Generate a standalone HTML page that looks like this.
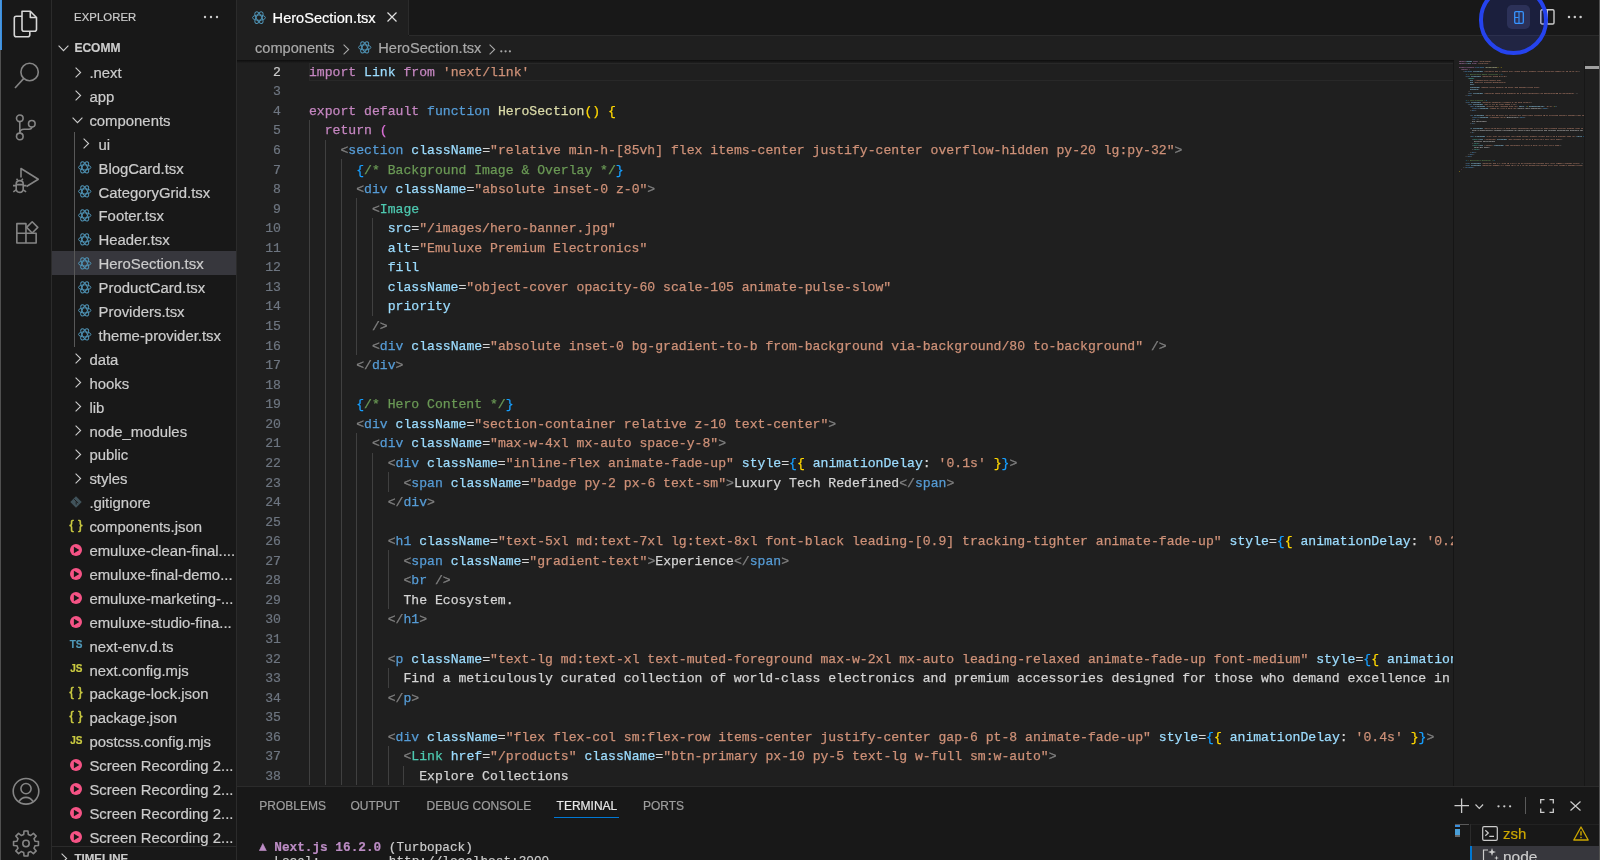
<!DOCTYPE html><html><head><meta charset="utf-8"><style>
*{margin:0;padding:0;box-sizing:border-box}
html,body{width:1600px;height:860px;overflow:hidden;background:#181818}
body{position:relative;font-family:"Liberation Sans",sans-serif;color:#CCCCCC;-webkit-text-stroke:0.2px currentColor}
.a{position:absolute}
.mono{font-family:"Liberation Mono",monospace}
.row{position:absolute;left:52px;width:184px;height:23.9px;white-space:nowrap}
.row .t{position:absolute;top:0;line-height:23.9px;font-size:14.2px;color:#CCCCCC}
.cl{-webkit-text-stroke:0.25px currentColor;position:absolute;left:237px;width:1300px;transform-origin:0 0;transform:scaleX(0.96446);height:19.56px;line-height:19.56px;white-space:pre;font-size:13.600px;color:#D4D4D4;overflow:hidden}
.ln{position:absolute;left:237px;width:44px;text-align:right;transform-origin:100% 0;transform:scaleX(0.96446);height:19.56px;line-height:19.56px;font-size:13.600px;color:#6E7681}
.g{position:absolute;width:1px;background:#404040}
svg{position:absolute;overflow:visible}
</style></head><body><div class="a" style="left:0;top:0;width:1600px;height:860px;overflow:hidden;will-change:transform">
<div class="a" style="left:0;top:0;width:1px;height:860px;background:#505050"></div>
<div class="a" style="left:51px;top:0;width:1px;height:860px;background:#2B2B2B"></div>
<div class="a" style="left:236px;top:0;width:1px;height:860px;background:#2B2B2B"></div>
<div class="a" style="left:237px;top:36px;width:1363px;height:751px;background:#1F1F1F"></div>
<div class="a" style="left:237px;top:0;width:171px;height:36px;background:#1F1F1F"></div>
<div class="a" style="left:408px;top:0;width:1px;height:35px;background:#2B2B2B"></div>
<div class="a" style="left:409px;top:35px;width:1191px;height:1px;background:#2B2B2B"></div>
<div class="a mono" style="left:0;top:0;width:1454px;height:786px;overflow:hidden;will-change:transform">
<div class="a" style="left:309px;top:62.8px;width:1145px;height:18.1px;border:1.6px solid #282828;border-right:none"></div>
<div class="ln" style="top:62.77px;color:#CCCCCC">2</div>
<div class="cl" style="top:62.77px;left:309.40px"><span style="color:#C586C0">import</span> <span style="color:#9CDCFE">Link</span> <span style="color:#C586C0">from</span> <span style="color:#CE9178">&#x27;next/link&#x27;</span></div>
<div class="ln" style="top:82.33px;color:#6E7681">3</div>
<div class="cl" style="top:82.33px;left:309.40px"></div>
<div class="ln" style="top:101.89px;color:#6E7681">4</div>
<div class="cl" style="top:101.89px;left:309.40px"><span style="color:#C586C0">export</span> <span style="color:#C586C0">default</span> <span style="color:#569CD6">function</span> <span style="color:#DCDCAA">HeroSection</span><span style="color:#FFD700">(</span><span style="color:#FFD700">)</span> <span style="color:#FFD700">{</span></div>
<div class="ln" style="top:121.45px;color:#6E7681">5</div>
<div class="g" style="left:309px;top:120.15px;height:19.86px"></div>
<div class="cl" style="top:121.45px;left:309.40px">  <span style="color:#C586C0">return</span> <span style="color:#DA70D6">(</span></div>
<div class="ln" style="top:141.01px;color:#6E7681">6</div>
<div class="g" style="left:309px;top:139.71px;height:19.86px"></div>
<div class="g" style="left:325px;top:139.71px;height:19.86px"></div>
<div class="cl" style="top:141.01px;left:309.40px">    <span style="color:#808080">&lt;</span><span style="color:#569CD6">section</span> <span style="color:#9CDCFE">className</span><span style="color:#D4D4D4">=</span><span style="color:#CE9178">&quot;relative min-h-[85vh] flex items-center justify-center overflow-hidden py-20 lg:py-32&quot;</span><span style="color:#808080">&gt;</span></div>
<div class="ln" style="top:160.57px;color:#6E7681">7</div>
<div class="g" style="left:309px;top:159.27px;height:19.86px"></div>
<div class="g" style="left:325px;top:159.27px;height:19.86px"></div>
<div class="g" style="left:341px;top:159.27px;height:19.86px"></div>
<div class="cl" style="top:160.57px;left:309.40px">      <span style="color:#179FFF">{</span><span style="color:#6A9955">/* Background Image &amp; Overlay */</span><span style="color:#179FFF">}</span></div>
<div class="ln" style="top:180.13px;color:#6E7681">8</div>
<div class="g" style="left:309px;top:178.83px;height:19.86px"></div>
<div class="g" style="left:325px;top:178.83px;height:19.86px"></div>
<div class="g" style="left:341px;top:178.83px;height:19.86px"></div>
<div class="cl" style="top:180.13px;left:309.40px">      <span style="color:#808080">&lt;</span><span style="color:#569CD6">div</span> <span style="color:#9CDCFE">className</span><span style="color:#D4D4D4">=</span><span style="color:#CE9178">&quot;absolute inset-0 z-0&quot;</span><span style="color:#808080">&gt;</span></div>
<div class="ln" style="top:199.69px;color:#6E7681">9</div>
<div class="g" style="left:309px;top:198.39px;height:19.86px"></div>
<div class="g" style="left:325px;top:198.39px;height:19.86px"></div>
<div class="g" style="left:341px;top:198.39px;height:19.86px"></div>
<div class="g" style="left:356px;top:198.39px;height:19.86px"></div>
<div class="cl" style="top:199.69px;left:309.40px">        <span style="color:#808080">&lt;</span><span style="color:#4EC9B0">Image</span></div>
<div class="ln" style="top:219.25px;color:#6E7681">10</div>
<div class="g" style="left:309px;top:217.95px;height:19.86px"></div>
<div class="g" style="left:325px;top:217.95px;height:19.86px"></div>
<div class="g" style="left:341px;top:217.95px;height:19.86px"></div>
<div class="g" style="left:356px;top:217.95px;height:19.86px"></div>
<div class="g" style="left:372px;top:217.95px;height:19.86px"></div>
<div class="cl" style="top:219.25px;left:309.40px">          <span style="color:#9CDCFE">src</span><span style="color:#D4D4D4">=</span><span style="color:#CE9178">&quot;/images/hero-banner.jpg&quot;</span></div>
<div class="ln" style="top:238.81px;color:#6E7681">11</div>
<div class="g" style="left:309px;top:237.51px;height:19.86px"></div>
<div class="g" style="left:325px;top:237.51px;height:19.86px"></div>
<div class="g" style="left:341px;top:237.51px;height:19.86px"></div>
<div class="g" style="left:356px;top:237.51px;height:19.86px"></div>
<div class="g" style="left:372px;top:237.51px;height:19.86px"></div>
<div class="cl" style="top:238.81px;left:309.40px">          <span style="color:#9CDCFE">alt</span><span style="color:#D4D4D4">=</span><span style="color:#CE9178">&quot;Emuluxe Premium Electronics&quot;</span></div>
<div class="ln" style="top:258.37px;color:#6E7681">12</div>
<div class="g" style="left:309px;top:257.07px;height:19.86px"></div>
<div class="g" style="left:325px;top:257.07px;height:19.86px"></div>
<div class="g" style="left:341px;top:257.07px;height:19.86px"></div>
<div class="g" style="left:356px;top:257.07px;height:19.86px"></div>
<div class="g" style="left:372px;top:257.07px;height:19.86px"></div>
<div class="cl" style="top:258.37px;left:309.40px">          <span style="color:#9CDCFE">fill</span></div>
<div class="ln" style="top:277.93px;color:#6E7681">13</div>
<div class="g" style="left:309px;top:276.63px;height:19.86px"></div>
<div class="g" style="left:325px;top:276.63px;height:19.86px"></div>
<div class="g" style="left:341px;top:276.63px;height:19.86px"></div>
<div class="g" style="left:356px;top:276.63px;height:19.86px"></div>
<div class="g" style="left:372px;top:276.63px;height:19.86px"></div>
<div class="cl" style="top:277.93px;left:309.40px">          <span style="color:#9CDCFE">className</span><span style="color:#D4D4D4">=</span><span style="color:#CE9178">&quot;object-cover opacity-60 scale-105 animate-pulse-slow&quot;</span></div>
<div class="ln" style="top:297.49px;color:#6E7681">14</div>
<div class="g" style="left:309px;top:296.19px;height:19.86px"></div>
<div class="g" style="left:325px;top:296.19px;height:19.86px"></div>
<div class="g" style="left:341px;top:296.19px;height:19.86px"></div>
<div class="g" style="left:356px;top:296.19px;height:19.86px"></div>
<div class="g" style="left:372px;top:296.19px;height:19.86px"></div>
<div class="cl" style="top:297.49px;left:309.40px">          <span style="color:#9CDCFE">priority</span></div>
<div class="ln" style="top:317.05px;color:#6E7681">15</div>
<div class="g" style="left:309px;top:315.75px;height:19.86px"></div>
<div class="g" style="left:325px;top:315.75px;height:19.86px"></div>
<div class="g" style="left:341px;top:315.75px;height:19.86px"></div>
<div class="g" style="left:356px;top:315.75px;height:19.86px"></div>
<div class="cl" style="top:317.05px;left:309.40px">        <span style="color:#808080">/&gt;</span></div>
<div class="ln" style="top:336.61px;color:#6E7681">16</div>
<div class="g" style="left:309px;top:335.31px;height:19.86px"></div>
<div class="g" style="left:325px;top:335.31px;height:19.86px"></div>
<div class="g" style="left:341px;top:335.31px;height:19.86px"></div>
<div class="g" style="left:356px;top:335.31px;height:19.86px"></div>
<div class="cl" style="top:336.61px;left:309.40px">        <span style="color:#808080">&lt;</span><span style="color:#569CD6">div</span> <span style="color:#9CDCFE">className</span><span style="color:#D4D4D4">=</span><span style="color:#CE9178">&quot;absolute inset-0 bg-gradient-to-b from-background via-background/80 to-background&quot;</span> <span style="color:#808080">/&gt;</span></div>
<div class="ln" style="top:356.17px;color:#6E7681">17</div>
<div class="g" style="left:309px;top:354.87px;height:19.86px"></div>
<div class="g" style="left:325px;top:354.87px;height:19.86px"></div>
<div class="g" style="left:341px;top:354.87px;height:19.86px"></div>
<div class="cl" style="top:356.17px;left:309.40px">      <span style="color:#808080">&lt;/</span><span style="color:#569CD6">div</span><span style="color:#808080">&gt;</span></div>
<div class="ln" style="top:375.73px;color:#6E7681">18</div>
<div class="g" style="left:309px;top:374.43px;height:19.86px"></div>
<div class="g" style="left:325px;top:374.43px;height:19.86px"></div>
<div class="g" style="left:341px;top:374.43px;height:19.86px"></div>
<div class="cl" style="top:375.73px;left:309.40px"></div>
<div class="ln" style="top:395.29px;color:#6E7681">19</div>
<div class="g" style="left:309px;top:393.99px;height:19.86px"></div>
<div class="g" style="left:325px;top:393.99px;height:19.86px"></div>
<div class="g" style="left:341px;top:393.99px;height:19.86px"></div>
<div class="cl" style="top:395.29px;left:309.40px">      <span style="color:#179FFF">{</span><span style="color:#6A9955">/* Hero Content */</span><span style="color:#179FFF">}</span></div>
<div class="ln" style="top:414.85px;color:#6E7681">20</div>
<div class="g" style="left:309px;top:413.55px;height:19.86px"></div>
<div class="g" style="left:325px;top:413.55px;height:19.86px"></div>
<div class="g" style="left:341px;top:413.55px;height:19.86px"></div>
<div class="cl" style="top:414.85px;left:309.40px">      <span style="color:#808080">&lt;</span><span style="color:#569CD6">div</span> <span style="color:#9CDCFE">className</span><span style="color:#D4D4D4">=</span><span style="color:#CE9178">&quot;section-container relative z-10 text-center&quot;</span><span style="color:#808080">&gt;</span></div>
<div class="ln" style="top:434.41px;color:#6E7681">21</div>
<div class="g" style="left:309px;top:433.11px;height:19.86px"></div>
<div class="g" style="left:325px;top:433.11px;height:19.86px"></div>
<div class="g" style="left:341px;top:433.11px;height:19.86px"></div>
<div class="g" style="left:356px;top:433.11px;height:19.86px"></div>
<div class="cl" style="top:434.41px;left:309.40px">        <span style="color:#808080">&lt;</span><span style="color:#569CD6">div</span> <span style="color:#9CDCFE">className</span><span style="color:#D4D4D4">=</span><span style="color:#CE9178">&quot;max-w-4xl mx-auto space-y-8&quot;</span><span style="color:#808080">&gt;</span></div>
<div class="ln" style="top:453.97px;color:#6E7681">22</div>
<div class="g" style="left:309px;top:452.67px;height:19.86px"></div>
<div class="g" style="left:325px;top:452.67px;height:19.86px"></div>
<div class="g" style="left:341px;top:452.67px;height:19.86px"></div>
<div class="g" style="left:356px;top:452.67px;height:19.86px"></div>
<div class="g" style="left:372px;top:452.67px;height:19.86px"></div>
<div class="cl" style="top:453.97px;left:309.40px">          <span style="color:#808080">&lt;</span><span style="color:#569CD6">div</span> <span style="color:#9CDCFE">className</span><span style="color:#D4D4D4">=</span><span style="color:#CE9178">&quot;inline-flex animate-fade-up&quot;</span> <span style="color:#9CDCFE">style</span><span style="color:#D4D4D4">=</span><span style="color:#179FFF">{</span><span style="color:#FFD700">{</span> <span style="color:#9CDCFE">animationDelay</span><span style="color:#D4D4D4">:</span> <span style="color:#CE9178">&#x27;0.1s&#x27;</span> <span style="color:#FFD700">}</span><span style="color:#179FFF">}</span><span style="color:#808080">&gt;</span></div>
<div class="ln" style="top:473.53px;color:#6E7681">23</div>
<div class="g" style="left:309px;top:472.23px;height:19.86px"></div>
<div class="g" style="left:325px;top:472.23px;height:19.86px"></div>
<div class="g" style="left:341px;top:472.23px;height:19.86px"></div>
<div class="g" style="left:356px;top:472.23px;height:19.86px"></div>
<div class="g" style="left:372px;top:472.23px;height:19.86px"></div>
<div class="g" style="left:388px;top:472.23px;height:19.86px"></div>
<div class="cl" style="top:473.53px;left:309.40px">            <span style="color:#808080">&lt;</span><span style="color:#569CD6">span</span> <span style="color:#9CDCFE">className</span><span style="color:#D4D4D4">=</span><span style="color:#CE9178">&quot;badge py-2 px-6 text-sm&quot;</span><span style="color:#808080">&gt;</span><span style="color:#D4D4D4">Luxury Tech Redefined</span><span style="color:#808080">&lt;/</span><span style="color:#569CD6">span</span><span style="color:#808080">&gt;</span></div>
<div class="ln" style="top:493.09px;color:#6E7681">24</div>
<div class="g" style="left:309px;top:491.79px;height:19.86px"></div>
<div class="g" style="left:325px;top:491.79px;height:19.86px"></div>
<div class="g" style="left:341px;top:491.79px;height:19.86px"></div>
<div class="g" style="left:356px;top:491.79px;height:19.86px"></div>
<div class="g" style="left:372px;top:491.79px;height:19.86px"></div>
<div class="cl" style="top:493.09px;left:309.40px">          <span style="color:#808080">&lt;/</span><span style="color:#569CD6">div</span><span style="color:#808080">&gt;</span></div>
<div class="ln" style="top:512.65px;color:#6E7681">25</div>
<div class="g" style="left:309px;top:511.35px;height:19.86px"></div>
<div class="g" style="left:325px;top:511.35px;height:19.86px"></div>
<div class="g" style="left:341px;top:511.35px;height:19.86px"></div>
<div class="g" style="left:356px;top:511.35px;height:19.86px"></div>
<div class="g" style="left:372px;top:511.35px;height:19.86px"></div>
<div class="cl" style="top:512.65px;left:309.40px"></div>
<div class="ln" style="top:532.21px;color:#6E7681">26</div>
<div class="g" style="left:309px;top:530.91px;height:19.86px"></div>
<div class="g" style="left:325px;top:530.91px;height:19.86px"></div>
<div class="g" style="left:341px;top:530.91px;height:19.86px"></div>
<div class="g" style="left:356px;top:530.91px;height:19.86px"></div>
<div class="g" style="left:372px;top:530.91px;height:19.86px"></div>
<div class="cl" style="top:532.21px;left:309.40px">          <span style="color:#808080">&lt;</span><span style="color:#569CD6">h1</span> <span style="color:#9CDCFE">className</span><span style="color:#D4D4D4">=</span><span style="color:#CE9178">&quot;text-5xl md:text-7xl lg:text-8xl font-black leading-[0.9] tracking-tighter animate-fade-up&quot;</span> <span style="color:#9CDCFE">style</span><span style="color:#D4D4D4">=</span><span style="color:#179FFF">{</span><span style="color:#FFD700">{</span> <span style="color:#9CDCFE">animationDelay</span><span style="color:#D4D4D4">:</span> <span style="color:#CE9178">&#x27;0.2s&#x27;</span> <span style="color:#FFD700">}</span><span style="color:#179FFF">}</span><span style="color:#808080">&gt;</span></div>
<div class="ln" style="top:551.77px;color:#6E7681">27</div>
<div class="g" style="left:309px;top:550.47px;height:19.86px"></div>
<div class="g" style="left:325px;top:550.47px;height:19.86px"></div>
<div class="g" style="left:341px;top:550.47px;height:19.86px"></div>
<div class="g" style="left:356px;top:550.47px;height:19.86px"></div>
<div class="g" style="left:372px;top:550.47px;height:19.86px"></div>
<div class="g" style="left:388px;top:550.47px;height:19.86px"></div>
<div class="cl" style="top:551.77px;left:309.40px">            <span style="color:#808080">&lt;</span><span style="color:#569CD6">span</span> <span style="color:#9CDCFE">className</span><span style="color:#D4D4D4">=</span><span style="color:#CE9178">&quot;gradient-text&quot;</span><span style="color:#808080">&gt;</span><span style="color:#D4D4D4">Experience</span><span style="color:#808080">&lt;/</span><span style="color:#569CD6">span</span><span style="color:#808080">&gt;</span></div>
<div class="ln" style="top:571.33px;color:#6E7681">28</div>
<div class="g" style="left:309px;top:570.03px;height:19.86px"></div>
<div class="g" style="left:325px;top:570.03px;height:19.86px"></div>
<div class="g" style="left:341px;top:570.03px;height:19.86px"></div>
<div class="g" style="left:356px;top:570.03px;height:19.86px"></div>
<div class="g" style="left:372px;top:570.03px;height:19.86px"></div>
<div class="g" style="left:388px;top:570.03px;height:19.86px"></div>
<div class="cl" style="top:571.33px;left:309.40px">            <span style="color:#808080">&lt;</span><span style="color:#569CD6">br</span> <span style="color:#808080">/&gt;</span></div>
<div class="ln" style="top:590.89px;color:#6E7681">29</div>
<div class="g" style="left:309px;top:589.59px;height:19.86px"></div>
<div class="g" style="left:325px;top:589.59px;height:19.86px"></div>
<div class="g" style="left:341px;top:589.59px;height:19.86px"></div>
<div class="g" style="left:356px;top:589.59px;height:19.86px"></div>
<div class="g" style="left:372px;top:589.59px;height:19.86px"></div>
<div class="g" style="left:388px;top:589.59px;height:19.86px"></div>
<div class="cl" style="top:590.89px;left:309.40px">            <span style="color:#D4D4D4">The Ecosystem.</span></div>
<div class="ln" style="top:610.45px;color:#6E7681">30</div>
<div class="g" style="left:309px;top:609.15px;height:19.86px"></div>
<div class="g" style="left:325px;top:609.15px;height:19.86px"></div>
<div class="g" style="left:341px;top:609.15px;height:19.86px"></div>
<div class="g" style="left:356px;top:609.15px;height:19.86px"></div>
<div class="g" style="left:372px;top:609.15px;height:19.86px"></div>
<div class="cl" style="top:610.45px;left:309.40px">          <span style="color:#808080">&lt;/</span><span style="color:#569CD6">h1</span><span style="color:#808080">&gt;</span></div>
<div class="ln" style="top:630.01px;color:#6E7681">31</div>
<div class="g" style="left:309px;top:628.71px;height:19.86px"></div>
<div class="g" style="left:325px;top:628.71px;height:19.86px"></div>
<div class="g" style="left:341px;top:628.71px;height:19.86px"></div>
<div class="g" style="left:356px;top:628.71px;height:19.86px"></div>
<div class="g" style="left:372px;top:628.71px;height:19.86px"></div>
<div class="cl" style="top:630.01px;left:309.40px"></div>
<div class="ln" style="top:649.57px;color:#6E7681">32</div>
<div class="g" style="left:309px;top:648.27px;height:19.86px"></div>
<div class="g" style="left:325px;top:648.27px;height:19.86px"></div>
<div class="g" style="left:341px;top:648.27px;height:19.86px"></div>
<div class="g" style="left:356px;top:648.27px;height:19.86px"></div>
<div class="g" style="left:372px;top:648.27px;height:19.86px"></div>
<div class="cl" style="top:649.57px;left:309.40px">          <span style="color:#808080">&lt;</span><span style="color:#569CD6">p</span> <span style="color:#9CDCFE">className</span><span style="color:#D4D4D4">=</span><span style="color:#CE9178">&quot;text-lg md:text-xl text-muted-foreground max-w-2xl mx-auto leading-relaxed animate-fade-up font-medium&quot;</span> <span style="color:#9CDCFE">style</span><span style="color:#D4D4D4">=</span><span style="color:#179FFF">{</span><span style="color:#FFD700">{</span> <span style="color:#9CDCFE">animationDelay</span><span style="color:#D4D4D4">:</span> <span style="color:#CE9178">&#x27;0.3s&#x27;</span> <span style="color:#FFD700">}</span><span style="color:#179FFF">}</span><span style="color:#808080">&gt;</span></div>
<div class="ln" style="top:669.13px;color:#6E7681">33</div>
<div class="g" style="left:309px;top:667.83px;height:19.86px"></div>
<div class="g" style="left:325px;top:667.83px;height:19.86px"></div>
<div class="g" style="left:341px;top:667.83px;height:19.86px"></div>
<div class="g" style="left:356px;top:667.83px;height:19.86px"></div>
<div class="g" style="left:372px;top:667.83px;height:19.86px"></div>
<div class="g" style="left:388px;top:667.83px;height:19.86px"></div>
<div class="cl" style="top:669.13px;left:309.40px">            <span style="color:#D4D4D4">Find a meticulously curated collection of world-class electronics and premium accessories designed for those who demand excellence in every detail.</span></div>
<div class="ln" style="top:688.69px;color:#6E7681">34</div>
<div class="g" style="left:309px;top:687.39px;height:19.86px"></div>
<div class="g" style="left:325px;top:687.39px;height:19.86px"></div>
<div class="g" style="left:341px;top:687.39px;height:19.86px"></div>
<div class="g" style="left:356px;top:687.39px;height:19.86px"></div>
<div class="g" style="left:372px;top:687.39px;height:19.86px"></div>
<div class="cl" style="top:688.69px;left:309.40px">          <span style="color:#808080">&lt;/</span><span style="color:#569CD6">p</span><span style="color:#808080">&gt;</span></div>
<div class="ln" style="top:708.25px;color:#6E7681">35</div>
<div class="g" style="left:309px;top:706.95px;height:19.86px"></div>
<div class="g" style="left:325px;top:706.95px;height:19.86px"></div>
<div class="g" style="left:341px;top:706.95px;height:19.86px"></div>
<div class="g" style="left:356px;top:706.95px;height:19.86px"></div>
<div class="g" style="left:372px;top:706.95px;height:19.86px"></div>
<div class="cl" style="top:708.25px;left:309.40px"></div>
<div class="ln" style="top:727.81px;color:#6E7681">36</div>
<div class="g" style="left:309px;top:726.51px;height:19.86px"></div>
<div class="g" style="left:325px;top:726.51px;height:19.86px"></div>
<div class="g" style="left:341px;top:726.51px;height:19.86px"></div>
<div class="g" style="left:356px;top:726.51px;height:19.86px"></div>
<div class="g" style="left:372px;top:726.51px;height:19.86px"></div>
<div class="cl" style="top:727.81px;left:309.40px">          <span style="color:#808080">&lt;</span><span style="color:#569CD6">div</span> <span style="color:#9CDCFE">className</span><span style="color:#D4D4D4">=</span><span style="color:#CE9178">&quot;flex flex-col sm:flex-row items-center justify-center gap-6 pt-8 animate-fade-up&quot;</span> <span style="color:#9CDCFE">style</span><span style="color:#D4D4D4">=</span><span style="color:#179FFF">{</span><span style="color:#FFD700">{</span> <span style="color:#9CDCFE">animationDelay</span><span style="color:#D4D4D4">:</span> <span style="color:#CE9178">&#x27;0.4s&#x27;</span> <span style="color:#FFD700">}</span><span style="color:#179FFF">}</span><span style="color:#808080">&gt;</span></div>
<div class="ln" style="top:747.37px;color:#6E7681">37</div>
<div class="g" style="left:309px;top:746.07px;height:19.86px"></div>
<div class="g" style="left:325px;top:746.07px;height:19.86px"></div>
<div class="g" style="left:341px;top:746.07px;height:19.86px"></div>
<div class="g" style="left:356px;top:746.07px;height:19.86px"></div>
<div class="g" style="left:372px;top:746.07px;height:19.86px"></div>
<div class="g" style="left:388px;top:746.07px;height:19.86px"></div>
<div class="cl" style="top:747.37px;left:309.40px">            <span style="color:#808080">&lt;</span><span style="color:#4EC9B0">Link</span> <span style="color:#9CDCFE">href</span><span style="color:#D4D4D4">=</span><span style="color:#CE9178">&quot;/products&quot;</span> <span style="color:#9CDCFE">className</span><span style="color:#D4D4D4">=</span><span style="color:#CE9178">&quot;btn-primary px-10 py-5 text-lg w-full sm:w-auto&quot;</span><span style="color:#808080">&gt;</span></div>
<div class="ln" style="top:766.93px;color:#6E7681">38</div>
<div class="g" style="left:309px;top:765.63px;height:19.86px"></div>
<div class="g" style="left:325px;top:765.63px;height:19.86px"></div>
<div class="g" style="left:341px;top:765.63px;height:19.86px"></div>
<div class="g" style="left:356px;top:765.63px;height:19.86px"></div>
<div class="g" style="left:372px;top:765.63px;height:19.86px"></div>
<div class="g" style="left:388px;top:765.63px;height:19.86px"></div>
<div class="g" style="left:403px;top:765.63px;height:19.86px"></div>
<div class="cl" style="top:766.93px;left:309.40px">              <span style="color:#D4D4D4">Explore Collections</span></div>
</div>
<div class="a" style="left:74px;top:9px;font-size:11.3px;line-height:16px;color:#CCCCCC;letter-spacing:0.1px">EXPLORER</div>
<svg style="left:203px;top:15px" width="16" height="4"><circle cx="2" cy="2" r="1.2" fill="#CCCCCC"/><circle cx="8" cy="2" r="1.2" fill="#CCCCCC"/><circle cx="14" cy="2" r="1.2" fill="#CCCCCC"/></svg>
<svg style="left:57.7px;top:45.2px" width="11" height="7"><path d="M0.6 0.6 L5.5 5.6 L10.4 0.6" fill="none" stroke="#CCCCCC" stroke-width="1.1"/></svg>
<div class="a" style="left:74.4px;top:40px;font-weight:bold;font-size:12px;line-height:16px;color:#CCCCCC">ECOMM</div>
<div class="a" style="left:52px;top:36px;width:184px;height:810px;overflow:hidden">
<svg style="left:22.7px;top:30.5px" width="7" height="11"><path d="M0.6 0.6 L5.6 5.5 L0.6 10.4" fill="none" stroke="#CCCCCC" stroke-width="1.1"/></svg>
<div class="a" style="left:37.40px;top:26.00px;height:23.90px;line-height:23.90px;font-size:14.9px;color:#CCCCCC;white-space:nowrap">.next</div>
<svg style="left:22.7px;top:54.4px" width="7" height="11"><path d="M0.6 0.6 L5.6 5.5 L0.6 10.4" fill="none" stroke="#CCCCCC" stroke-width="1.1"/></svg>
<div class="a" style="left:37.40px;top:49.90px;height:23.90px;line-height:23.90px;font-size:14.9px;color:#CCCCCC;white-space:nowrap">app</div>
<svg style="left:19.8px;top:80.8px" width="11" height="7"><path d="M0.6 0.6 L5.5 5.6 L10.4 0.6" fill="none" stroke="#CCCCCC" stroke-width="1.1"/></svg>
<div class="a" style="left:37.40px;top:73.80px;height:23.90px;line-height:23.90px;font-size:14.9px;color:#CCCCCC;white-space:nowrap">components</div>
<svg style="left:31.4px;top:102.1px" width="7" height="11"><path d="M0.6 0.6 L5.6 5.5 L0.6 10.4" fill="none" stroke="#CCCCCC" stroke-width="1.1"/></svg>
<div class="a" style="left:46.50px;top:97.70px;height:23.90px;line-height:23.90px;font-size:14.9px;color:#CCCCCC;white-space:nowrap">ui</div>
<svg style="left:26.2px;top:125.0px" width="14.0" height="13.0"><g fill="none" stroke="#4F93B5" stroke-width="1"><ellipse cx="6.7" cy="6.4" rx="6.2" ry="2.55"/><ellipse cx="6.7" cy="6.4" rx="6.2" ry="2.55" transform="rotate(60 6.7 6.4)"/><ellipse cx="6.7" cy="6.4" rx="6.2" ry="2.55" transform="rotate(120 6.7 6.4)"/></g></svg>
<div class="a" style="left:46.50px;top:121.60px;height:23.90px;line-height:23.90px;font-size:14.9px;color:#CCCCCC;white-space:nowrap">BlogCard.tsx</div>
<svg style="left:26.2px;top:148.9px" width="14.0" height="13.0"><g fill="none" stroke="#4F93B5" stroke-width="1"><ellipse cx="6.7" cy="6.4" rx="6.2" ry="2.55"/><ellipse cx="6.7" cy="6.4" rx="6.2" ry="2.55" transform="rotate(60 6.7 6.4)"/><ellipse cx="6.7" cy="6.4" rx="6.2" ry="2.55" transform="rotate(120 6.7 6.4)"/></g></svg>
<div class="a" style="left:46.50px;top:145.50px;height:23.90px;line-height:23.90px;font-size:14.9px;color:#CCCCCC;white-space:nowrap">CategoryGrid.tsx</div>
<svg style="left:26.2px;top:172.8px" width="14.0" height="13.0"><g fill="none" stroke="#4F93B5" stroke-width="1"><ellipse cx="6.7" cy="6.4" rx="6.2" ry="2.55"/><ellipse cx="6.7" cy="6.4" rx="6.2" ry="2.55" transform="rotate(60 6.7 6.4)"/><ellipse cx="6.7" cy="6.4" rx="6.2" ry="2.55" transform="rotate(120 6.7 6.4)"/></g></svg>
<div class="a" style="left:46.50px;top:169.40px;height:23.90px;line-height:23.90px;font-size:14.9px;color:#CCCCCC;white-space:nowrap">Footer.tsx</div>
<svg style="left:26.2px;top:196.7px" width="14.0" height="13.0"><g fill="none" stroke="#4F93B5" stroke-width="1"><ellipse cx="6.7" cy="6.4" rx="6.2" ry="2.55"/><ellipse cx="6.7" cy="6.4" rx="6.2" ry="2.55" transform="rotate(60 6.7 6.4)"/><ellipse cx="6.7" cy="6.4" rx="6.2" ry="2.55" transform="rotate(120 6.7 6.4)"/></g></svg>
<div class="a" style="left:46.50px;top:193.30px;height:23.90px;line-height:23.90px;font-size:14.9px;color:#CCCCCC;white-space:nowrap">Header.tsx</div>
<div class="a" style="left:0;top:215.20px;width:184px;height:24.00px;background:#37373D"></div>
<svg style="left:26.2px;top:220.6px" width="14.0" height="13.0"><g fill="none" stroke="#4F93B5" stroke-width="1"><ellipse cx="6.7" cy="6.4" rx="6.2" ry="2.55"/><ellipse cx="6.7" cy="6.4" rx="6.2" ry="2.55" transform="rotate(60 6.7 6.4)"/><ellipse cx="6.7" cy="6.4" rx="6.2" ry="2.55" transform="rotate(120 6.7 6.4)"/></g></svg>
<div class="a" style="left:46.50px;top:217.20px;height:23.90px;line-height:23.90px;font-size:14.9px;color:#CCCCCC;white-space:nowrap">HeroSection.tsx</div>
<svg style="left:26.2px;top:244.6px" width="14.0" height="13.0"><g fill="none" stroke="#4F93B5" stroke-width="1"><ellipse cx="6.7" cy="6.4" rx="6.2" ry="2.55"/><ellipse cx="6.7" cy="6.4" rx="6.2" ry="2.55" transform="rotate(60 6.7 6.4)"/><ellipse cx="6.7" cy="6.4" rx="6.2" ry="2.55" transform="rotate(120 6.7 6.4)"/></g></svg>
<div class="a" style="left:46.50px;top:241.10px;height:23.90px;line-height:23.90px;font-size:14.9px;color:#CCCCCC;white-space:nowrap">ProductCard.tsx</div>
<svg style="left:26.2px;top:268.4px" width="14.0" height="13.0"><g fill="none" stroke="#4F93B5" stroke-width="1"><ellipse cx="6.7" cy="6.4" rx="6.2" ry="2.55"/><ellipse cx="6.7" cy="6.4" rx="6.2" ry="2.55" transform="rotate(60 6.7 6.4)"/><ellipse cx="6.7" cy="6.4" rx="6.2" ry="2.55" transform="rotate(120 6.7 6.4)"/></g></svg>
<div class="a" style="left:46.50px;top:265.00px;height:23.90px;line-height:23.90px;font-size:14.9px;color:#CCCCCC;white-space:nowrap">Providers.tsx</div>
<svg style="left:26.2px;top:292.3px" width="14.0" height="13.0"><g fill="none" stroke="#4F93B5" stroke-width="1"><ellipse cx="6.7" cy="6.4" rx="6.2" ry="2.55"/><ellipse cx="6.7" cy="6.4" rx="6.2" ry="2.55" transform="rotate(60 6.7 6.4)"/><ellipse cx="6.7" cy="6.4" rx="6.2" ry="2.55" transform="rotate(120 6.7 6.4)"/></g></svg>
<div class="a" style="left:46.50px;top:288.90px;height:23.90px;line-height:23.90px;font-size:14.9px;color:#CCCCCC;white-space:nowrap">theme-provider.tsx</div>
<svg style="left:22.7px;top:317.2px" width="7" height="11"><path d="M0.6 0.6 L5.6 5.5 L0.6 10.4" fill="none" stroke="#CCCCCC" stroke-width="1.1"/></svg>
<div class="a" style="left:37.40px;top:312.80px;height:23.90px;line-height:23.90px;font-size:14.9px;color:#CCCCCC;white-space:nowrap">data</div>
<svg style="left:22.7px;top:341.1px" width="7" height="11"><path d="M0.6 0.6 L5.6 5.5 L0.6 10.4" fill="none" stroke="#CCCCCC" stroke-width="1.1"/></svg>
<div class="a" style="left:37.40px;top:336.70px;height:23.90px;line-height:23.90px;font-size:14.9px;color:#CCCCCC;white-space:nowrap">hooks</div>
<svg style="left:22.7px;top:365.0px" width="7" height="11"><path d="M0.6 0.6 L5.6 5.5 L0.6 10.4" fill="none" stroke="#CCCCCC" stroke-width="1.1"/></svg>
<div class="a" style="left:37.40px;top:360.60px;height:23.90px;line-height:23.90px;font-size:14.9px;color:#CCCCCC;white-space:nowrap">lib</div>
<svg style="left:22.7px;top:388.9px" width="7" height="11"><path d="M0.6 0.6 L5.6 5.5 L0.6 10.4" fill="none" stroke="#CCCCCC" stroke-width="1.1"/></svg>
<div class="a" style="left:37.40px;top:384.50px;height:23.90px;line-height:23.90px;font-size:14.9px;color:#CCCCCC;white-space:nowrap">node_modules</div>
<svg style="left:22.7px;top:412.8px" width="7" height="11"><path d="M0.6 0.6 L5.6 5.5 L0.6 10.4" fill="none" stroke="#CCCCCC" stroke-width="1.1"/></svg>
<div class="a" style="left:37.40px;top:408.40px;height:23.90px;line-height:23.90px;font-size:14.9px;color:#CCCCCC;white-space:nowrap">public</div>
<svg style="left:22.7px;top:436.7px" width="7" height="11"><path d="M0.6 0.6 L5.6 5.5 L0.6 10.4" fill="none" stroke="#CCCCCC" stroke-width="1.1"/></svg>
<div class="a" style="left:37.40px;top:432.30px;height:23.90px;line-height:23.90px;font-size:14.9px;color:#CCCCCC;white-space:nowrap">styles</div>
<svg style="left:18.0px;top:460.1px" width="12" height="12" viewBox="0 0 12 12"><path d="M6 0.3 L11.7 6 L6 11.7 L0.3 6 Z" fill="#41535B"/><path d="M4.2 3.2 L6.2 5.2 M6.2 5.2 L6.2 8.6 M6.2 5.2 L8.2 7" stroke="#181818" stroke-width="0.9" fill="none"/></svg>
<div class="a" style="left:37.40px;top:456.20px;height:23.90px;line-height:23.90px;font-size:14.9px;color:#CCCCCC;white-space:nowrap">.gitignore</div>
<div class="a" style="left:17.5px;top:481.8px;width:13px;height:14px;font:12.5px/14px 'Liberation Sans',sans-serif;color:#CBCB41;letter-spacing:0.5px;white-space:pre;-webkit-text-stroke:0.5px #CBCB41">{ }</div>
<div class="a" style="left:37.40px;top:480.10px;height:23.90px;line-height:23.90px;font-size:14.9px;color:#CCCCCC;white-space:nowrap">components.json</div>
<svg style="left:18.0px;top:508.0px" width="12" height="12" viewBox="0 0 12 12"><circle cx="6" cy="6" r="6" fill="#F55385"/><path d="M3.9 2.8 L9.4 6 L3.9 9.2 Z" fill="#181818"/></svg>
<div class="a" style="left:37.40px;top:504.00px;height:23.90px;line-height:23.90px;font-size:14.9px;color:#CCCCCC;white-space:nowrap">emuluxe-clean-final....</div>
<svg style="left:18.0px;top:531.9px" width="12" height="12" viewBox="0 0 12 12"><circle cx="6" cy="6" r="6" fill="#F55385"/><path d="M3.9 2.8 L9.4 6 L3.9 9.2 Z" fill="#181818"/></svg>
<div class="a" style="left:37.40px;top:527.90px;height:23.90px;line-height:23.90px;font-size:14.9px;color:#CCCCCC;white-space:nowrap">emuluxe-final-demo...</div>
<svg style="left:18.0px;top:555.8px" width="12" height="12" viewBox="0 0 12 12"><circle cx="6" cy="6" r="6" fill="#F55385"/><path d="M3.9 2.8 L9.4 6 L3.9 9.2 Z" fill="#181818"/></svg>
<div class="a" style="left:37.40px;top:551.80px;height:23.90px;line-height:23.90px;font-size:14.9px;color:#CCCCCC;white-space:nowrap">emuluxe-marketing-...</div>
<svg style="left:18.0px;top:579.6px" width="12" height="12" viewBox="0 0 12 12"><circle cx="6" cy="6" r="6" fill="#F55385"/><path d="M3.9 2.8 L9.4 6 L3.9 9.2 Z" fill="#181818"/></svg>
<div class="a" style="left:37.40px;top:575.70px;height:23.90px;line-height:23.90px;font-size:14.9px;color:#CCCCCC;white-space:nowrap">emuluxe-studio-fina...</div>
<div class="a" style="left:17.8px;top:603.0px;font:bold 10px/12px 'Liberation Sans',sans-serif;color:#519ABA;letter-spacing:-0.2px;white-space:nowrap">TS</div>
<div class="a" style="left:37.40px;top:599.60px;height:23.90px;line-height:23.90px;font-size:14.9px;color:#CCCCCC;white-space:nowrap">next-env.d.ts</div>
<div class="a" style="left:18.3px;top:627.0px;font:bold 10px/12px 'Liberation Sans',sans-serif;color:#CBCB41;letter-spacing:-0.2px;white-space:nowrap">JS</div>
<div class="a" style="left:37.40px;top:623.50px;height:23.90px;line-height:23.90px;font-size:14.9px;color:#CCCCCC;white-space:nowrap">next.config.mjs</div>
<div class="a" style="left:17.5px;top:649.1px;width:13px;height:14px;font:12.5px/14px 'Liberation Sans',sans-serif;color:#CBCB41;letter-spacing:0.5px;white-space:pre;-webkit-text-stroke:0.5px #CBCB41">{ }</div>
<div class="a" style="left:37.40px;top:647.40px;height:23.90px;line-height:23.90px;font-size:14.9px;color:#CCCCCC;white-space:nowrap">package-lock.json</div>
<div class="a" style="left:17.5px;top:673.0px;width:13px;height:14px;font:12.5px/14px 'Liberation Sans',sans-serif;color:#CBCB41;letter-spacing:0.5px;white-space:pre;-webkit-text-stroke:0.5px #CBCB41">{ }</div>
<div class="a" style="left:37.40px;top:671.30px;height:23.90px;line-height:23.90px;font-size:14.9px;color:#CCCCCC;white-space:nowrap">package.json</div>
<div class="a" style="left:18.3px;top:698.6px;font:bold 10px/12px 'Liberation Sans',sans-serif;color:#CBCB41;letter-spacing:-0.2px;white-space:nowrap">JS</div>
<div class="a" style="left:37.40px;top:695.20px;height:23.90px;line-height:23.90px;font-size:14.9px;color:#CCCCCC;white-space:nowrap">postcss.config.mjs</div>
<svg style="left:18.0px;top:723.0px" width="12" height="12" viewBox="0 0 12 12"><circle cx="6" cy="6" r="6" fill="#F55385"/><path d="M3.9 2.8 L9.4 6 L3.9 9.2 Z" fill="#181818"/></svg>
<div class="a" style="left:37.40px;top:719.10px;height:23.90px;line-height:23.90px;font-size:14.9px;color:#CCCCCC;white-space:nowrap">Screen Recording 2...</div>
<svg style="left:18.0px;top:747.0px" width="12" height="12" viewBox="0 0 12 12"><circle cx="6" cy="6" r="6" fill="#F55385"/><path d="M3.9 2.8 L9.4 6 L3.9 9.2 Z" fill="#181818"/></svg>
<div class="a" style="left:37.40px;top:743.00px;height:23.90px;line-height:23.90px;font-size:14.9px;color:#CCCCCC;white-space:nowrap">Screen Recording 2...</div>
<svg style="left:18.0px;top:770.9px" width="12" height="12" viewBox="0 0 12 12"><circle cx="6" cy="6" r="6" fill="#F55385"/><path d="M3.9 2.8 L9.4 6 L3.9 9.2 Z" fill="#181818"/></svg>
<div class="a" style="left:37.40px;top:766.90px;height:23.90px;line-height:23.90px;font-size:14.9px;color:#CCCCCC;white-space:nowrap">Screen Recording 2...</div>
<svg style="left:18.0px;top:794.8px" width="12" height="12" viewBox="0 0 12 12"><circle cx="6" cy="6" r="6" fill="#F55385"/><path d="M3.9 2.8 L9.4 6 L3.9 9.2 Z" fill="#181818"/></svg>
<div class="a" style="left:37.40px;top:790.80px;height:23.90px;line-height:23.90px;font-size:14.9px;color:#CCCCCC;white-space:nowrap">Screen Recording 2...</div>
<div class="a" style="left:22.40px;top:95.70px;width:1px;height:215.10px;background:#585858"></div>
</div>
<div class="a" style="left:52px;top:846px;width:184px;height:1px;background:#2B2B2B"></div>
<svg style="left:60.8px;top:853.0px" width="7" height="11"><path d="M0.6 0.6 L5.6 5.5 L0.6 10.4" fill="none" stroke="#CCCCCC" stroke-width="1.1"/></svg>
<div class="a" style="left:74.5px;top:849.5px;font-weight:bold;font-size:11.5px;line-height:16px;color:#CCCCCC">TIMELINE</div>
<svg style="left:252.0px;top:10.5px" width="14.5" height="13.5"><g fill="none" stroke="#4F93B5" stroke-width="1"><ellipse cx="6.95769" cy="6.64615" rx="6.43846" ry="2.64808"/><ellipse cx="6.95769" cy="6.64615" rx="6.43846" ry="2.64808" transform="rotate(60 6.95769 6.64615)"/><ellipse cx="6.95769" cy="6.64615" rx="6.43846" ry="2.64808" transform="rotate(120 6.95769 6.64615)"/></g></svg>
<div class="a" style="left:272.6px;top:8px;font-size:14.6px;line-height:20px;color:#FFFFFF;white-space:nowrap">HeroSection.tsx</div>
<svg style="left:387px;top:12.3px" width="10" height="10"><path d="M0.5 0.5 L9.5 9.5 M9.5 0.5 L0.5 9.5" stroke="#E0E0E0" stroke-width="1.2"/></svg>
<div class="a" style="left:255px;top:38px;font-size:14.6px;line-height:20px;color:#A9A9A9;white-space:nowrap">components</div>
<svg style="left:342.9px;top:43.5px" width="7" height="11"><path d="M0.6 0.6 L5.6 5.5 L0.6 10.4" fill="none" stroke="#A9A9A9" stroke-width="1.1"/></svg>
<svg style="left:358.0px;top:41.0px" width="14.0" height="13.0"><g fill="none" stroke="#4F93B5" stroke-width="1"><ellipse cx="6.7" cy="6.4" rx="6.2" ry="2.55"/><ellipse cx="6.7" cy="6.4" rx="6.2" ry="2.55" transform="rotate(60 6.7 6.4)"/><ellipse cx="6.7" cy="6.4" rx="6.2" ry="2.55" transform="rotate(120 6.7 6.4)"/></g></svg>
<div class="a" style="left:378.3px;top:38px;font-size:14.6px;line-height:20px;color:#A9A9A9;white-space:nowrap">HeroSection.tsx</div>
<svg style="left:488.5px;top:43.5px" width="7" height="11"><path d="M0.6 0.6 L5.6 5.5 L0.6 10.4" fill="none" stroke="#A9A9A9" stroke-width="1.1"/></svg>
<svg style="left:500px;top:50px" width="12" height="3"><circle cx="1.3" cy="1.3" r="1.1" fill="#A9A9A9"/><circle cx="5.6" cy="1.3" r="1.1" fill="#A9A9A9"/><circle cx="9.9" cy="1.3" r="1.1" fill="#A9A9A9"/></svg>
<div class="a" style="left:237px;top:60px;width:1217px;height:3px;background:linear-gradient(#0e0e0e,rgba(14,14,14,0))"></div>
<div class="a" style="left:0;top:0;width:2.3px;height:49.7px;background:linear-gradient(90deg,#5B9BD5,#2A8AE6)"></div>
<svg style="left:13px;top:10px" width="25" height="28" viewBox="0 0 25 28"><g fill="none" stroke="#D7D7D7" stroke-width="1.6" stroke-linejoin="round"><path d="M9 1.3 H17.3 L23.5 7.5 V19.2 Q23.5 21.2 21.5 21.2 H11 Q9 21.2 9 19.2 Z"/><path d="M17.3 1.3 V7.5 H23.5"/><path d="M9 6.2 H3.3 Q1.3 6.2 1.3 8.2 V24.8 Q1.3 26.8 3.3 26.8 H14.8 Q16.8 26.8 16.8 24.8 V21.2"/></g></svg>
<svg style="left:14px;top:62px" width="26" height="28" viewBox="0 0 26 28"><g fill="none" stroke="#858585" stroke-width="1.6"><circle cx="15.6" cy="10" r="8.7"/><path d="M9.6 16.6 L1 26"/></g></svg>
<svg style="left:15px;top:114px" width="22" height="28" viewBox="0 0 22 28"><g fill="none" stroke="#858585" stroke-width="1.6"><circle cx="4.8" cy="4.3" r="3.3"/><circle cx="4.8" cy="22.4" r="3.3"/><circle cx="16.8" cy="9.8" r="3.3"/><path d="M4.8 7.6 V19.1"/><path d="M16.8 13.1 Q16.8 15.2 14 15.2 H9 Q4.8 15.2 4.8 19"/></g></svg>
<svg style="left:12px;top:167px" width="28" height="28" viewBox="0 0 28 28"><g fill="none" stroke="#858585" stroke-width="1.6" stroke-linejoin="round"><path d="M9 10.5 V1.5 L26.3 12.2 L14.5 19.5"/><path d="M4.2 17 Q4.2 13.6 7.7 13.6 Q11.2 13.6 11.2 17 V21.8 Q11.2 25.4 7.7 25.4 Q4.2 25.4 4.2 21.8 Z"/><path d="M5.8 13.2 L4.5 11.8 M9.6 13.2 L10.9 11.8 M1 18.6 H4.2 M11.2 18.6 H14.4 M1.3 24.8 L4.5 22.6 M14.1 24.8 L10.9 22.6 M4.2 17.6 H11.2"/></g></svg>
<svg style="left:15px;top:220px" width="25" height="25" viewBox="0 0 25 25"><g fill="none" stroke="#858585" stroke-width="1.6" stroke-linejoin="round"><path d="M1.85 3.65 H10.95 V13.3 H21.15 V22.95 H1.85 Z M1.85 13.3 H10.95 V22.95"/><path d="M17.2 1.8 L22.8 7.4 L17.2 13 L11.6 7.4 Z"/></g></svg>
<svg style="left:12px;top:777px" width="28" height="28" viewBox="0 0 28 28"><g fill="none" stroke="#858585" stroke-width="1.6"><circle cx="14" cy="14.3" r="12.8"/><circle cx="14" cy="11.6" r="5.1"/><path d="M7.0 24.6 A7.9 7.9 0 0 1 21 24.6"/></g></svg>
<svg style="left:12px;top:829px" width="28" height="28" viewBox="0 0 28 28"><g fill="none" stroke="#858585" stroke-width="1.6" stroke-linejoin="round"><path d="M26.44 12.53 L26.44 16.47 L23.01 16.81 L22.00 19.23 L24.19 21.91 L21.41 24.69 L18.73 22.50 L16.31 23.51 L15.97 26.94 L12.03 26.94 L11.69 23.51 L9.27 22.50 L6.59 24.69 L3.81 21.91 L6.00 19.23 L4.99 16.81 L1.56 16.47 L1.56 12.53 L4.99 12.19 L6.00 9.77 L3.81 7.09 L6.59 4.31 L9.27 6.50 L11.69 5.49 L12.03 2.06 L15.97 2.06 L16.31 5.49 L18.73 6.50 L21.41 4.31 L24.19 7.09 L22.00 9.77 L23.01 12.19 Z"/><circle cx="14" cy="14.5" r="3.2"/></g></svg>
<div class="a" style="left:1453px;top:61px;width:1px;height:725px;background:#151515"></div>
<div class="a" style="left:1454px;top:61px;width:131px;height:725px;overflow:hidden">
<div class="a mono" style="left:4.60px;top:-0.70px;width:1300px;transform-origin:0 0;transform:scale(0.13837);font-size:13.60px;-webkit-text-stroke:0.3px currentColor;opacity:0.8">
<div style="height:15.682px;line-height:15.682px;white-space:pre;transform-origin:0 0;transform:scaleX(0.96446)"><span style="color:#C586C0">import</span> <span style="color:#9CDCFE">Image</span> <span style="color:#C586C0">from</span> <span style="color:#CE9178">&#x27;next/image&#x27;</span></div>
<div style="height:15.682px;line-height:15.682px;white-space:pre;transform-origin:0 0;transform:scaleX(0.96446)"><span style="color:#C586C0">import</span> <span style="color:#9CDCFE">Link</span> <span style="color:#C586C0">from</span> <span style="color:#CE9178">&#x27;next/link&#x27;</span></div>
<div style="height:15.682px;line-height:15.682px;white-space:pre;transform-origin:0 0;transform:scaleX(0.96446)"> </div>
<div style="height:15.682px;line-height:15.682px;white-space:pre;transform-origin:0 0;transform:scaleX(0.96446)"><span style="color:#C586C0">export</span> <span style="color:#C586C0">default</span> <span style="color:#569CD6">function</span> <span style="color:#DCDCAA">HeroSection</span><span style="color:#FFD700">(</span><span style="color:#FFD700">)</span> <span style="color:#FFD700">{</span></div>
<div style="height:15.682px;line-height:15.682px;white-space:pre;transform-origin:0 0;transform:scaleX(0.96446)">  <span style="color:#C586C0">return</span> <span style="color:#DA70D6">(</span></div>
<div style="height:15.682px;line-height:15.682px;white-space:pre;transform-origin:0 0;transform:scaleX(0.96446)">    <span style="color:#808080">&lt;</span><span style="color:#569CD6">section</span> <span style="color:#9CDCFE">className</span><span style="color:#D4D4D4">=</span><span style="color:#CE9178">&quot;relative min-h-[85vh] flex items-center justify-center overflow-hidden py-20 lg:py-32&quot;</span><span style="color:#808080">&gt;</span></div>
<div style="height:15.682px;line-height:15.682px;white-space:pre;transform-origin:0 0;transform:scaleX(0.96446)">      <span style="color:#179FFF">{</span><span style="color:#6A9955">/* Background Image &amp; Overlay */</span><span style="color:#179FFF">}</span></div>
<div style="height:15.682px;line-height:15.682px;white-space:pre;transform-origin:0 0;transform:scaleX(0.96446)">      <span style="color:#808080">&lt;</span><span style="color:#569CD6">div</span> <span style="color:#9CDCFE">className</span><span style="color:#D4D4D4">=</span><span style="color:#CE9178">&quot;absolute inset-0 z-0&quot;</span><span style="color:#808080">&gt;</span></div>
<div style="height:15.682px;line-height:15.682px;white-space:pre;transform-origin:0 0;transform:scaleX(0.96446)">        <span style="color:#808080">&lt;</span><span style="color:#4EC9B0">Image</span></div>
<div style="height:15.682px;line-height:15.682px;white-space:pre;transform-origin:0 0;transform:scaleX(0.96446)">          <span style="color:#9CDCFE">src</span><span style="color:#D4D4D4">=</span><span style="color:#CE9178">&quot;/images/hero-banner.jpg&quot;</span></div>
<div style="height:15.682px;line-height:15.682px;white-space:pre;transform-origin:0 0;transform:scaleX(0.96446)">          <span style="color:#9CDCFE">alt</span><span style="color:#D4D4D4">=</span><span style="color:#CE9178">&quot;Emuluxe Premium Electronics&quot;</span></div>
<div style="height:15.682px;line-height:15.682px;white-space:pre;transform-origin:0 0;transform:scaleX(0.96446)">          <span style="color:#9CDCFE">fill</span></div>
<div style="height:15.682px;line-height:15.682px;white-space:pre;transform-origin:0 0;transform:scaleX(0.96446)">          <span style="color:#9CDCFE">className</span><span style="color:#D4D4D4">=</span><span style="color:#CE9178">&quot;object-cover opacity-60 scale-105 animate-pulse-slow&quot;</span></div>
<div style="height:15.682px;line-height:15.682px;white-space:pre;transform-origin:0 0;transform:scaleX(0.96446)">          <span style="color:#9CDCFE">priority</span></div>
<div style="height:15.682px;line-height:15.682px;white-space:pre;transform-origin:0 0;transform:scaleX(0.96446)">        <span style="color:#808080">/&gt;</span></div>
<div style="height:15.682px;line-height:15.682px;white-space:pre;transform-origin:0 0;transform:scaleX(0.96446)">        <span style="color:#808080">&lt;</span><span style="color:#569CD6">div</span> <span style="color:#9CDCFE">className</span><span style="color:#D4D4D4">=</span><span style="color:#CE9178">&quot;absolute inset-0 bg-gradient-to-b from-background via-background/80 to-background&quot;</span> <span style="color:#808080">/&gt;</span></div>
<div style="height:15.682px;line-height:15.682px;white-space:pre;transform-origin:0 0;transform:scaleX(0.96446)">      <span style="color:#808080">&lt;/</span><span style="color:#569CD6">div</span><span style="color:#808080">&gt;</span></div>
<div style="height:15.682px;line-height:15.682px;white-space:pre;transform-origin:0 0;transform:scaleX(0.96446)"> </div>
<div style="height:15.682px;line-height:15.682px;white-space:pre;transform-origin:0 0;transform:scaleX(0.96446)">      <span style="color:#179FFF">{</span><span style="color:#6A9955">/* Hero Content */</span><span style="color:#179FFF">}</span></div>
<div style="height:15.682px;line-height:15.682px;white-space:pre;transform-origin:0 0;transform:scaleX(0.96446)">      <span style="color:#808080">&lt;</span><span style="color:#569CD6">div</span> <span style="color:#9CDCFE">className</span><span style="color:#D4D4D4">=</span><span style="color:#CE9178">&quot;section-container relative z-10 text-center&quot;</span><span style="color:#808080">&gt;</span></div>
<div style="height:15.682px;line-height:15.682px;white-space:pre;transform-origin:0 0;transform:scaleX(0.96446)">        <span style="color:#808080">&lt;</span><span style="color:#569CD6">div</span> <span style="color:#9CDCFE">className</span><span style="color:#D4D4D4">=</span><span style="color:#CE9178">&quot;max-w-4xl mx-auto space-y-8&quot;</span><span style="color:#808080">&gt;</span></div>
<div style="height:15.682px;line-height:15.682px;white-space:pre;transform-origin:0 0;transform:scaleX(0.96446)">          <span style="color:#808080">&lt;</span><span style="color:#569CD6">div</span> <span style="color:#9CDCFE">className</span><span style="color:#D4D4D4">=</span><span style="color:#CE9178">&quot;inline-flex animate-fade-up&quot;</span> <span style="color:#9CDCFE">style</span><span style="color:#D4D4D4">=</span><span style="color:#179FFF">{</span><span style="color:#FFD700">{</span> <span style="color:#9CDCFE">animationDelay</span><span style="color:#D4D4D4">:</span> <span style="color:#CE9178">&#x27;0.1s&#x27;</span> <span style="color:#FFD700">}</span><span style="color:#179FFF">}</span><span style="color:#808080">&gt;</span></div>
<div style="height:15.682px;line-height:15.682px;white-space:pre;transform-origin:0 0;transform:scaleX(0.96446)">            <span style="color:#808080">&lt;</span><span style="color:#569CD6">span</span> <span style="color:#9CDCFE">className</span><span style="color:#D4D4D4">=</span><span style="color:#CE9178">&quot;badge py-2 px-6 text-sm&quot;</span><span style="color:#808080">&gt;</span><span style="color:#D4D4D4">Luxury Tech Redefined</span><span style="color:#808080">&lt;/</span><span style="color:#569CD6">span</span><span style="color:#808080">&gt;</span></div>
<div style="height:15.682px;line-height:15.682px;white-space:pre;transform-origin:0 0;transform:scaleX(0.96446)">          <span style="color:#808080">&lt;/</span><span style="color:#569CD6">div</span><span style="color:#808080">&gt;</span></div>
<div style="height:15.682px;line-height:15.682px;white-space:pre;transform-origin:0 0;transform:scaleX(0.96446)"> </div>
<div style="height:15.682px;line-height:15.682px;white-space:pre;transform-origin:0 0;transform:scaleX(0.96446)">          <span style="color:#808080">&lt;</span><span style="color:#569CD6">h1</span> <span style="color:#9CDCFE">className</span><span style="color:#D4D4D4">=</span><span style="color:#CE9178">&quot;text-5xl md:text-7xl lg:text-8xl font-black leading-[0.9] tracking-tighter animate-fade-up&quot;</span> <span style="color:#9CDCFE">style</span><span style="color:#D4D4D4">=</span><span style="color:#179FFF">{</span><span style="color:#FFD700">{</span> <span style="color:#9CDCFE">animationDelay</span><span style="color:#D4D4D4">:</span> <span style="color:#CE9178">&#x27;0.2s&#x27;</span> <span style="color:#FFD700">}</span><span style="color:#179FFF">}</span><span style="color:#808080">&gt;</span></div>
<div style="height:15.682px;line-height:15.682px;white-space:pre;transform-origin:0 0;transform:scaleX(0.96446)">            <span style="color:#808080">&lt;</span><span style="color:#569CD6">span</span> <span style="color:#9CDCFE">className</span><span style="color:#D4D4D4">=</span><span style="color:#CE9178">&quot;gradient-text&quot;</span><span style="color:#808080">&gt;</span><span style="color:#D4D4D4">Experience</span><span style="color:#808080">&lt;/</span><span style="color:#569CD6">span</span><span style="color:#808080">&gt;</span></div>
<div style="height:15.682px;line-height:15.682px;white-space:pre;transform-origin:0 0;transform:scaleX(0.96446)">            <span style="color:#808080">&lt;</span><span style="color:#569CD6">br</span> <span style="color:#808080">/&gt;</span></div>
<div style="height:15.682px;line-height:15.682px;white-space:pre;transform-origin:0 0;transform:scaleX(0.96446)">            <span style="color:#D4D4D4">The Ecosystem.</span></div>
<div style="height:15.682px;line-height:15.682px;white-space:pre;transform-origin:0 0;transform:scaleX(0.96446)">          <span style="color:#808080">&lt;/</span><span style="color:#569CD6">h1</span><span style="color:#808080">&gt;</span></div>
<div style="height:15.682px;line-height:15.682px;white-space:pre;transform-origin:0 0;transform:scaleX(0.96446)"> </div>
<div style="height:15.682px;line-height:15.682px;white-space:pre;transform-origin:0 0;transform:scaleX(0.96446)">          <span style="color:#808080">&lt;</span><span style="color:#569CD6">p</span> <span style="color:#9CDCFE">className</span><span style="color:#D4D4D4">=</span><span style="color:#CE9178">&quot;text-lg md:text-xl text-muted-foreground max-w-2xl mx-auto leading-relaxed animate-fade-up font-medium&quot;</span> <span style="color:#9CDCFE">style</span><span style="color:#D4D4D4">=</span><span style="color:#179FFF">{</span><span style="color:#FFD700">{</span> <span style="color:#9CDCFE">animationDelay</span><span style="color:#D4D4D4">:</span> <span style="color:#CE9178">&#x27;0.3s&#x27;</span> <span style="color:#FFD700">}</span><span style="color:#179FFF">}</span><span style="color:#808080">&gt;</span></div>
<div style="height:15.682px;line-height:15.682px;white-space:pre;transform-origin:0 0;transform:scaleX(0.96446)">            <span style="color:#D4D4D4">Find a meticulously curated collection of world-class electronics and premium accessories designed for those who demand excellence in every detail.</span></div>
<div style="height:15.682px;line-height:15.682px;white-space:pre;transform-origin:0 0;transform:scaleX(0.96446)">          <span style="color:#808080">&lt;/</span><span style="color:#569CD6">p</span><span style="color:#808080">&gt;</span></div>
<div style="height:15.682px;line-height:15.682px;white-space:pre;transform-origin:0 0;transform:scaleX(0.96446)"> </div>
<div style="height:15.682px;line-height:15.682px;white-space:pre;transform-origin:0 0;transform:scaleX(0.96446)">          <span style="color:#808080">&lt;</span><span style="color:#569CD6">div</span> <span style="color:#9CDCFE">className</span><span style="color:#D4D4D4">=</span><span style="color:#CE9178">&quot;flex flex-col sm:flex-row items-center justify-center gap-6 pt-8 animate-fade-up&quot;</span> <span style="color:#9CDCFE">style</span><span style="color:#D4D4D4">=</span><span style="color:#179FFF">{</span><span style="color:#FFD700">{</span> <span style="color:#9CDCFE">animationDelay</span><span style="color:#D4D4D4">:</span> <span style="color:#CE9178">&#x27;0.4s&#x27;</span> <span style="color:#FFD700">}</span><span style="color:#179FFF">}</span><span style="color:#808080">&gt;</span></div>
<div style="height:15.682px;line-height:15.682px;white-space:pre;transform-origin:0 0;transform:scaleX(0.96446)">            <span style="color:#808080">&lt;</span><span style="color:#4EC9B0">Link</span> <span style="color:#9CDCFE">href</span><span style="color:#D4D4D4">=</span><span style="color:#CE9178">&quot;/products&quot;</span> <span style="color:#9CDCFE">className</span><span style="color:#D4D4D4">=</span><span style="color:#CE9178">&quot;btn-primary px-10 py-5 text-lg w-full sm:w-auto&quot;</span><span style="color:#808080">&gt;</span></div>
<div style="height:15.682px;line-height:15.682px;white-space:pre;transform-origin:0 0;transform:scaleX(0.96446)">              <span style="color:#D4D4D4">Explore Collections</span></div>
<div style="height:15.682px;line-height:15.682px;white-space:pre;transform-origin:0 0;transform:scaleX(0.96446)">            <span style="color:#808080">&lt;/</span><span style="color:#4EC9B0">Link</span><span style="color:#808080">&gt;</span></div>
<div style="height:15.682px;line-height:15.682px;white-space:pre;transform-origin:0 0;transform:scaleX(0.96446)">            <span style="color:#808080">&lt;</span><span style="color:#4EC9B0">Link</span> <span style="color:#9CDCFE">href</span><span style="color:#D4D4D4">=</span><span style="color:#CE9178">&quot;/about&quot;</span> <span style="color:#9CDCFE">className</span><span style="color:#D4D4D4">=</span><span style="color:#CE9178">&quot;btn-secondary px-10 py-5 text-lg w-full sm:w-auto&quot;</span><span style="color:#808080">&gt;</span></div>
<div style="height:15.682px;line-height:15.682px;white-space:pre;transform-origin:0 0;transform:scaleX(0.96446)">              <span style="color:#D4D4D4">Read Our Story</span></div>
<div style="height:15.682px;line-height:15.682px;white-space:pre;transform-origin:0 0;transform:scaleX(0.96446)">            <span style="color:#808080">&lt;/</span><span style="color:#4EC9B0">Link</span><span style="color:#808080">&gt;</span></div>
<div style="height:15.682px;line-height:15.682px;white-space:pre;transform-origin:0 0;transform:scaleX(0.96446)">          <span style="color:#808080">&lt;/</span><span style="color:#569CD6">div</span><span style="color:#808080">&gt;</span></div>
<div style="height:15.682px;line-height:15.682px;white-space:pre;transform-origin:0 0;transform:scaleX(0.96446)">        <span style="color:#808080">&lt;/</span><span style="color:#569CD6">div</span><span style="color:#808080">&gt;</span></div>
<div style="height:15.682px;line-height:15.682px;white-space:pre;transform-origin:0 0;transform:scaleX(0.96446)">      <span style="color:#808080">&lt;/</span><span style="color:#569CD6">div</span><span style="color:#808080">&gt;</span></div>
<div style="height:15.682px;line-height:15.682px;white-space:pre;transform-origin:0 0;transform:scaleX(0.96446)"> </div>
<div style="height:15.682px;line-height:15.682px;white-space:pre;transform-origin:0 0;transform:scaleX(0.96446)">      <span style="color:#179FFF">{</span><span style="color:#6A9955">/* Decorative Elements */</span><span style="color:#179FFF">}</span></div>
<div style="height:15.682px;line-height:15.682px;white-space:pre;transform-origin:0 0;transform:scaleX(0.96446)">      <span style="color:#808080">&lt;</span><span style="color:#569CD6">div</span> <span style="color:#9CDCFE">className</span><span style="color:#D4D4D4">=</span><span style="color:#CE9178">&quot;absolute top-1/4 left-10 w-72 h-72 bg-primary/20 rounded-full blur-[100px] animate-pulse&quot;</span> <span style="color:#808080">/&gt;</span></div>
<div style="height:15.682px;line-height:15.682px;white-space:pre;transform-origin:0 0;transform:scaleX(0.96446)">      <span style="color:#808080">&lt;</span><span style="color:#569CD6">div</span> <span style="color:#9CDCFE">className</span><span style="color:#D4D4D4">=</span><span style="color:#CE9178">&quot;absolute bottom-1/4 right-10 w-96 h-96 bg-accent/10 rounded-full blur-[120px] animate-pulse&quot;</span> <span style="color:#808080">/&gt;</span></div>
<div style="height:15.682px;line-height:15.682px;white-space:pre;transform-origin:0 0;transform:scaleX(0.96446)">    <span style="color:#808080">&lt;/</span><span style="color:#569CD6">section</span><span style="color:#808080">&gt;</span></div>
<div style="height:15.682px;line-height:15.682px;white-space:pre;transform-origin:0 0;transform:scaleX(0.96446)">  <span style="color:#DA70D6">)</span></div>
<div style="height:15.682px;line-height:15.682px;white-space:pre;transform-origin:0 0;transform:scaleX(0.96446)"><span style="color:#FFD700">}</span></div>
</div></div>
<div class="a" style="left:1585px;top:61px;width:14px;height:725px;background:#1F1F1F;box-shadow:-1px 0 0 #171717"></div>
<div class="a" style="left:1585px;top:66px;width:14px;height:2.5px;background:#A0A0A0"></div>
<svg style="left:1540px;top:8.5px" width="15" height="16"><rect x="0.8" y="0.8" width="13.2" height="14.2" rx="1.3" fill="none" stroke="#CCCCCC" stroke-width="1.4"/><path d="M7.4 0.8 V15" stroke="#CCCCCC" stroke-width="1.2"/></svg>
<svg style="left:1567px;top:15px" width="16" height="4"><circle cx="2" cy="2" r="1.25" fill="#CCCCCC"/><circle cx="7.8" cy="2" r="1.25" fill="#CCCCCC"/><circle cx="13.6" cy="2" r="1.25" fill="#CCCCCC"/></svg>
<div class="a" style="left:1478.9px;top:-15px;width:69.5px;height:69.5px;border-radius:50%;border:4.6px solid #2543EE;background:rgba(45,70,255,0.16)"></div>
<div class="a" style="left:1506.6px;top:4.9px;width:23.5px;height:24px;border-radius:5px;background:rgba(90,100,160,0.28)"></div>
<svg style="left:1513.6px;top:10.8px" width="10" height="13"><rect x="0.7" y="0.7" width="8.6" height="11.6" rx="1.2" fill="none" stroke="#3794FF" stroke-width="1.3"/><path d="M5 0.7 V12.3 M1 6.5 H4.3" stroke="#3794FF" stroke-width="1.1"/></svg>
<div class="a" style="left:237px;top:786px;width:1363px;height:1px;background:#2B2B2B"></div>
<div class="a" style="left:237px;top:787px;width:1362px;height:73px;background:#181818"></div>
<div class="a" style="left:259.3px;top:798.3px;font-size:12px;line-height:16px;color:#9D9D9D;white-space:nowrap">PROBLEMS</div>
<div class="a" style="left:350.4px;top:798.3px;font-size:12px;line-height:16px;color:#9D9D9D;white-space:nowrap">OUTPUT</div>
<div class="a" style="left:426.5px;top:798.3px;font-size:12px;line-height:16px;color:#9D9D9D;white-space:nowrap">DEBUG CONSOLE</div>
<div class="a" style="left:556.6px;top:798.3px;font-size:12px;line-height:16px;color:#E7E7E7;white-space:nowrap">TERMINAL</div>
<div class="a" style="left:642.9px;top:798.3px;font-size:12px;line-height:16px;color:#9D9D9D;white-space:nowrap">PORTS</div>
<div class="a" style="left:553.5px;top:816.8px;width:65.3px;height:1.3px;background:#0078D4"></div>
<svg style="left:1453.5px;top:798px" width="16" height="16"><path d="M7.6 0.5 V15 M0.5 7.7 H15" stroke="#CCCCCC" stroke-width="1.3"/></svg>
<svg style="left:1475px;top:804px" width="9" height="6"><path d="M0.5 0.5 L4.3 4.5 L8.1 0.5" fill="none" stroke="#CCCCCC" stroke-width="1.1"/></svg>
<svg style="left:1497px;top:805px" width="15" height="3"><circle cx="1.5" cy="1.3" r="1.15" fill="#CCCCCC"/><circle cx="7.3" cy="1.3" r="1.15" fill="#CCCCCC"/><circle cx="13.1" cy="1.3" r="1.15" fill="#CCCCCC"/></svg>
<div class="a" style="left:1525px;top:797px;width:1px;height:17px;background:#5A5A5A"></div>
<svg style="left:1540px;top:799px" width="14" height="14"><path d="M0.7 4.5 V0.7 H4.5 M9.5 0.7 H13.3 V4.5 M13.3 9.5 V13.3 H9.5 M4.5 13.3 H0.7 V9.5" fill="none" stroke="#CCCCCC" stroke-width="1.3"/></svg>
<svg style="left:1570px;top:801px" width="11" height="10"><path d="M0.5 0.5 L10.5 9.5 M10.5 0.5 L0.5 9.5" stroke="#CCCCCC" stroke-width="1.2"/></svg>
<div class="a" style="left:258.5px;top:839.5px;font-family:&quot;Liberation Mono&quot;,monospace;font-size:13.2px;line-height:16px;white-space:pre;color:#CCCCCC;transform-origin:0 0;transform:scaleX(0.965)"><span style="color:#BC8CC4">&#9650; </span><span style="color:#BC8CC4;font-weight:bold">Next.js 16.2.0</span> (Turbopack)</div>
<div class="a" style="left:258.5px;top:854px;font-family:&quot;Liberation Mono&quot;,monospace;font-size:13.2px;line-height:16px;white-space:pre;color:#CCCCCC;transform-origin:0 0;transform:scaleX(0.965)">- Local:         http://localhost:3000</div>
<div class="a" style="left:1470px;top:824px;width:130px;height:36px;background:#181818;box-shadow:inset 0 1px 0 #222"></div>
<div class="a" style="left:1470px;top:824px;width:1px;height:36px;background:#2B2B2B"></div>
<div class="a" style="left:1455px;top:824px;width:14px;height:1px;background:#5a5a5a"></div>
<div class="a" style="left:1455px;top:825px;width:5px;height:2px;background:#3B8EDB"></div>
<div class="a" style="left:1455px;top:828.5px;width:5px;height:6px;background:#4A9FD8"></div>
<div class="a" style="left:1455px;top:835px;width:5px;height:2px;background:#666"></div>
<svg style="left:1482px;top:826px" width="16" height="15"><rect x="0.7" y="0.7" width="14.6" height="13.6" rx="1.3" fill="none" stroke="#CCCCCC" stroke-width="1.2"/><path d="M3.3 4.3 L6.3 7 L3.3 9.7 M7.3 10.4 H12" fill="none" stroke="#CCCCCC" stroke-width="1.2"/></svg>
<div class="a" style="left:1503px;top:825px;font-size:15px;line-height:18px;color:#CCA700;white-space:nowrap">zsh</div>
<svg style="left:1572.5px;top:825.5px" width="16" height="15"><path d="M8 1 L15.2 14 H0.8 Z" fill="none" stroke="#CCA700" stroke-width="1.3" stroke-linejoin="round"/><path d="M8 5.3 V9.6" stroke="#CCA700" stroke-width="1.4"/><circle cx="8" cy="11.6" r="0.8" fill="#CCA700"/></svg>
<div class="a" style="left:1471px;top:846px;width:128px;height:14px;background:#37373D"></div>
<div class="a" style="left:1470px;top:846px;width:2px;height:14px;background:#0078D4"></div>
<svg style="left:1482px;top:848px" width="18" height="14"><path d="M6 2 H1.5 V14" fill="none" stroke="#CCCCCC" stroke-width="1.2"/><path d="M10 0 L11 3 L14 4 L11 5 L10 8 L9 5 L6 4 L9 3 Z" fill="#CCCCCC"/><path d="M14.5 7.5 L15.1 9.4 L17 10 L15.1 10.6 L14.5 12.5 L13.9 10.6 L12 10 L13.9 9.4 Z" fill="#CCCCCC"/></svg>
<div class="a" style="left:1503px;top:848px;font-size:15.5px;line-height:18px;color:#CCCCCC;white-space:nowrap">node</div>
<div class="a" style="left:1599px;top:0;width:1px;height:860px;background:#505050"></div>
</div></body></html>
